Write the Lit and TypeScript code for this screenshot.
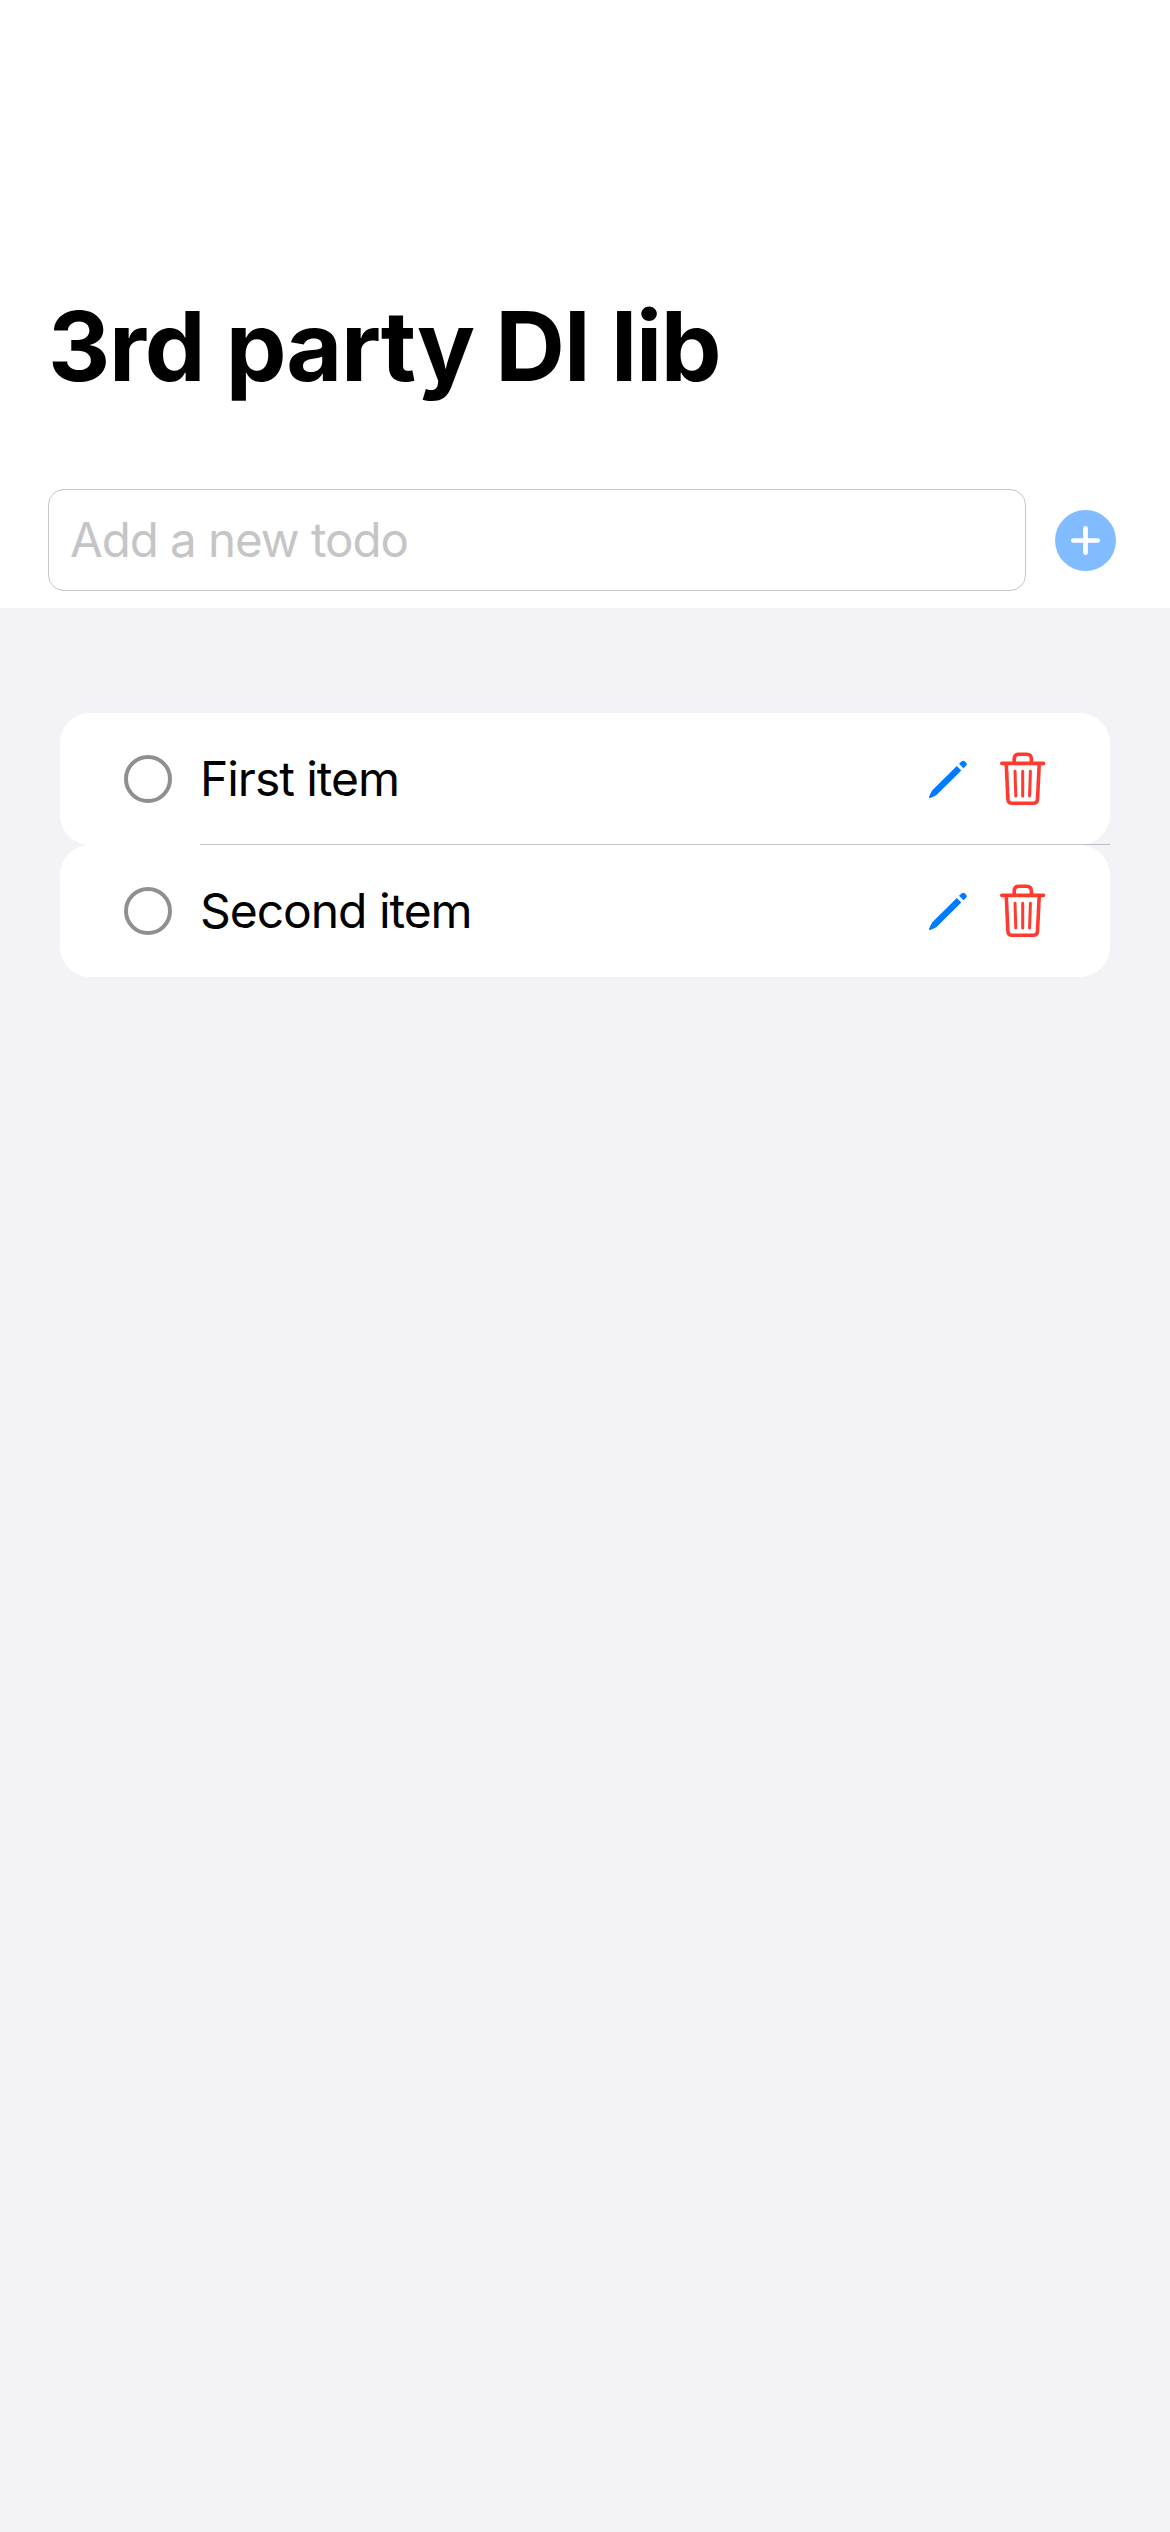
import { LitElement, html, css } from "lit";
import { customElement, property, state } from "lit/decorators.js";

@customElement("todo-row")
class TodoRow extends LitElement {
  @property() label = "";

  static styles = css`
    :host { display: block; }
    .row {
      display: flex;
      align-items: center;
      height: 132px;
      box-sizing: border-box;
      padding: 0 62px 0 64px;
      border-radius: 30px;
      background: #fff;
    }
    .check {
      width: 48px;
      height: 48px;
      box-sizing: border-box;
      border: 4px solid #8e8e93;
      border-radius: 50%;
      margin-right: 28px;
    }
    .label {
      flex: 1;
      font-size: 48px;
      line-height: 60px;
      color: #000;
      white-space: nowrap;
      letter-spacing: -1.05px;
    }
    .pencil { width: 44px; height: 60px; margin-right: 27px; }
    .trash { width: 52px; height: 60px; }
    svg { display: block; }
  `;

  render() {
    return html`
      <div class="row">
        <div class="check"></div>
        <div class="label">${this.label}</div>
        <svg class="pencil" viewBox="925 749 44 60" fill="#007aff">
          <path d="M956.8 765.9 L961.3 770.4 L936.8 794.8 Q935.9 795.6 934.8 796.1 L930.3 797.9 Q928.5 798.4 929.1 796.6 L931.2 792.2 Q931.7 791 932.6 790.1 Z" />
          <path d="M959 763.8 L961.5 761.5 Q963.2 760 964.9 761.5 L966.1 762.7 Q967.6 764.3 966.1 765.8 L963.5 768.3 Z" />
        </svg>
        <svg class="trash" viewBox="996 749 52 60" fill="none" stroke="#ff3b30" stroke-linecap="round" stroke-linejoin="round">
          <path stroke-width="3.6" d="M1001.8 763.4 H1043.5 M1014.2 763 V759 Q1014.2 754.2 1019 754.2 H1026.6 Q1031.4 754.2 1031.4 759 V763 M1006.3 764.5 L1007.9 799.3 Q1008.2 803.2 1012 803.2 H1033.4 Q1037.2 803.2 1037.5 799.3 L1039.2 764.5" />
          <path stroke-width="3" d="M1015 771.2 L1015.8 795.9 M1022.7 771.2 V795.9 M1030.4 771.2 L1029.6 795.9" />
        </svg>
      </div>
    `;
  }
}

@customElement("app-root")
class AppRoot extends LitElement {
  @state() private items = ["First item", "Second item"];

  static styles = css`
    :host {
      display: block;
      font-family: Inter, "Liberation Sans", sans-serif;
    }
    .screen {
      display: flex;
      flex-direction: column;
      min-height: 2532px;
      background: #f2f2f7;
    }
    .header {
      display: flex;
      flex-direction: column;
      height: 608px;
      box-sizing: border-box;
      padding: 286px 54px 0 48px;
      background: #fff;
    }
    .title {
      margin: 0 0 83px;
      font-size: 96.5px;
      line-height: 120px;
      font-weight: 700;
      letter-spacing: -1.3px;
      white-space: nowrap;
      color: #000;
    }
    .entry { display: flex; align-items: center; gap: 29px; }
    .field {
      width: 978px;
      height: 102px;
      box-sizing: border-box;
      padding: 0 21px 1px;
      border: 1px solid #c6c6c8;
      border-radius: 16px;
      background: #fff;
      outline: none;
      font: 400 47.5px/60px Inter, "Liberation Sans", sans-serif;
      letter-spacing: -1.05px;
    }
    .field::placeholder { color: #c5c5c7; opacity: 1; }
    .add { display: block; width: 61px; height: 61px; }
    .list { display: flex; flex-direction: column; padding: 105px 60px 0; }
    .divider { height: 1px; margin: -1px 0 0 140px; background: rgba(60, 60, 67, 0.29); z-index: 1; }
  `;

  render() {
    return html`
      <main class="screen">
        <header class="header">
          <h1 class="title">3rd party DI lib</h1>
          <div class="entry">
            <input class="field" placeholder="Add a new todo" />
            <svg class="add" viewBox="0 0 61 61">
              <circle cx="30.5" cy="30.5" r="30.5" fill="#80bcff" />
              <path d="M30.5 18.3 V42.7 M18.3 30.5 H42.7" stroke="#fff" stroke-width="4.7" stroke-linecap="round" />
            </svg>
          </div>
        </header>
        <section class="list">
          ${this.items.map(
            (item, i) => html`
              ${i > 0 ? html`<div class="divider"></div>` : ""}
              <todo-row .label=${item}></todo-row>
            `
          )}
        </section>
      </main>
    `;
  }
}
